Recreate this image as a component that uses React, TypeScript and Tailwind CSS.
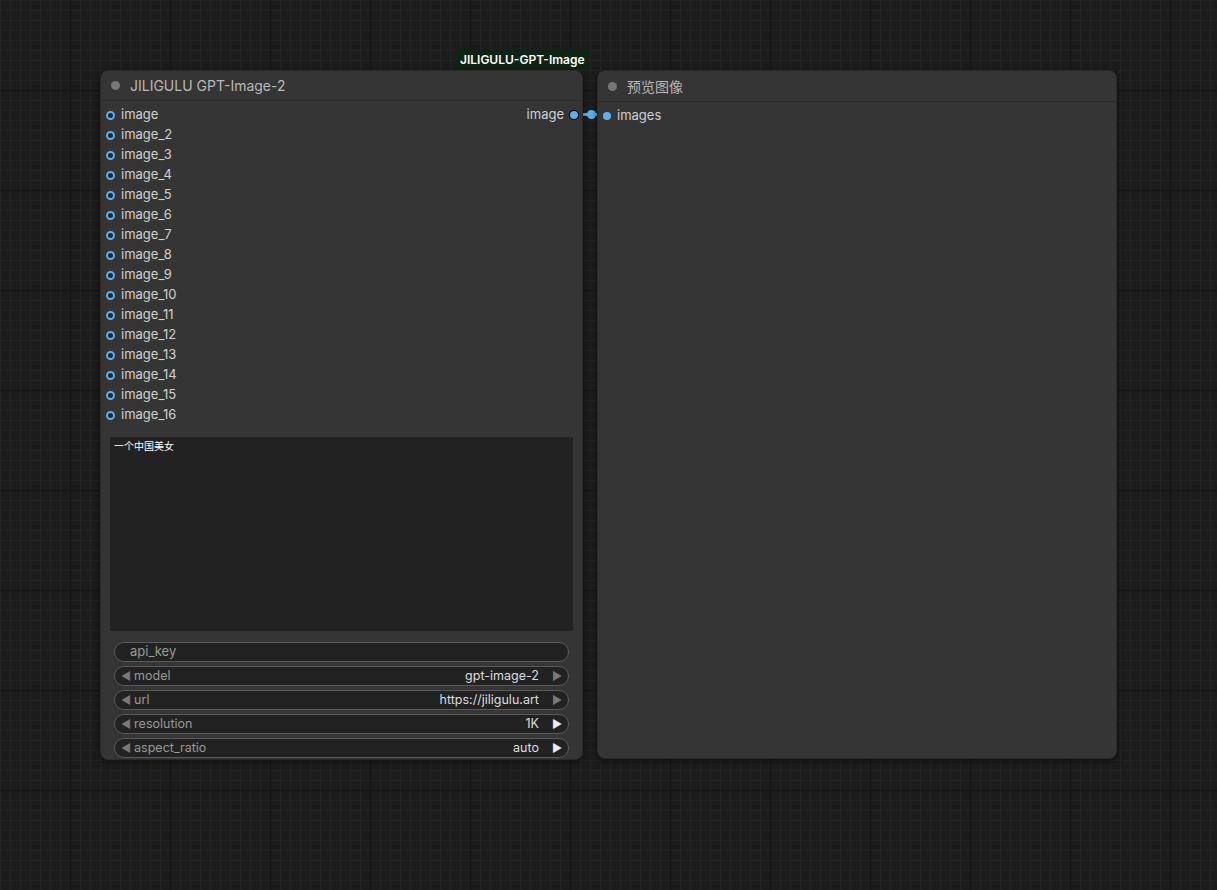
const inputs = ["image", ...Array.from({ length: 15 }, (_, i) => `image_${i + 2}`)];

const combos = [
  { name: "model", value: "gpt-image-2", dim: true },
  { name: "url", value: "https://jiligulu.art", dim: true },
  { name: "resolution", value: "1K", dim: false },
  { name: "aspect_ratio", value: "auto", dim: false },
];

function Slot() {
  return <span className="w-[9px] h-[9px] rounded-full border-[2.5px] border-[#5ab0f0] bg-[#1e2a33] shrink-0" />;
}

export default function App() {
  return (
    <div
      className="relative w-[1217px] h-[890px] overflow-hidden bg-[#1c1c1c] text-[13px] bg-[linear-gradient(#141414_1px,transparent_1px),linear-gradient(90deg,#141414_1px,transparent_1px),linear-gradient(#232323_1px,transparent_1px),linear-gradient(90deg,#232323_1px,transparent_1px)] bg-[size:100px_100px,100px_100px,10px_10px,10px_10px] bg-[position:-30px_-10px]"
      style={{ fontFamily: "Inter, 'Noto Sans CJK SC', sans-serif" }}
    >
      {/* group label */}
      <div className="absolute left-[456px] top-[50px] h-[19px] px-[4px] bg-[#0f2415] text-white text-[12px] font-semibold flex items-center rounded-t-[3px]">
        JILIGULU-GPT-Image
      </div>

      {/* link */}
      <svg className="absolute left-[570px] top-[105px]" width="45" height="20">
        <path d="M5 9.5 C 15 9.5, 25 9.5, 37 9.5" stroke="#5ab0f0" strokeWidth="3" fill="none" />
        <circle cx="21.5" cy="9.5" r="4.5" fill="#5ab0f0" />
      </svg>

      {/* node 1 */}
      <div className="absolute left-[100px] top-[70px] w-[483px] h-[690px] bg-[#353535] rounded-[8px] border border-[#2a2a2a] shadow-[0_2px_6px_rgba(0,0,0,0.5)] flex flex-col">
        <div className="h-[30px] flex items-center gap-[10px] px-[10px] border-b border-[#2b2b2b] text-[#b8b8b8] text-[14px]">
          <span className="w-[9px] h-[9px] rounded-full bg-[#777]" />
          JILIGULU GPT-Image-2
        </div>
        <div className="relative flex flex-col pt-[4px]">
          {inputs.map((n) => (
            <div key={n} className="h-[20px] flex items-center gap-[6px] pl-[5px] text-[#d0d0d0]">
              <Slot />
              {n}
            </div>
          ))}
          <div className="absolute right-[4px] top-[4px] h-[20px] flex items-center gap-[6px] text-[#d0d0d0]">
            image
            <span className="w-[8px] h-[8px] rounded-full bg-[#5ab0f0] ring-1 ring-black" />
          </div>
        </div>
        <div className="mx-[9px] mt-[12px] h-[194px] bg-[#222] px-[4px] py-[2px] text-[10px] text-white">一个中国美女</div>
        <div className="flex flex-col gap-[4px] mx-[13px] mt-[11px]">
          <div className="h-[20px] rounded-full border border-[#5a5a5a] bg-[#222] flex items-center pl-[15px] text-[#999]">api_key</div>
          {combos.map((c) => (
            <div key={c.name} className="h-[20px] rounded-full border border-[#5a5a5a] bg-[#222] flex items-center px-[6px] text-[12.5px]">
              <span className="text-[#777] text-[11px]">◀</span>
              <span className="ml-[3px] text-[#999] flex-1">{c.name}</span>
              <span className="text-[#ddd]">{c.value}</span>
              <span className={`ml-[13px] text-[11px] ${c.dim ? "text-[#777]" : "text-[#eee]"}`}>▶</span>
            </div>
          ))}
        </div>
      </div>

      {/* node 2 */}
      <div className="absolute left-[597px] top-[70px] w-[520px] h-[689px] bg-[#353535] rounded-[8px] border border-[#2a2a2a] shadow-[0_2px_6px_rgba(0,0,0,0.5)] flex flex-col">
        <div className="h-[31px] flex items-center gap-[10px] px-[10px] border-b border-[#2b2b2b] text-[#b8b8b8] text-[14px]">
          <span className="w-[9px] h-[9px] rounded-full bg-[#777]" />
          预览图像
        </div>
        <div className="h-[28px] flex items-center gap-[6px] pl-[5px] text-[#d0d0d0]">
          <span className="w-[8px] h-[8px] rounded-full bg-[#5ab0f0]" />
          images
        </div>
      </div>
    </div>
  );
}
